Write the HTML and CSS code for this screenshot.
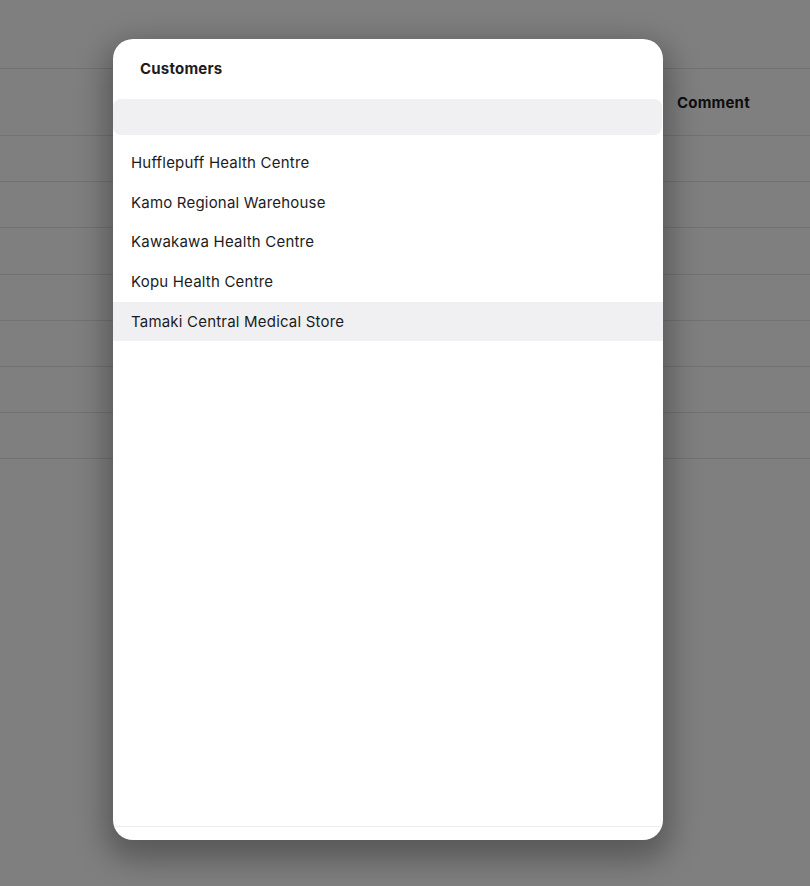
FILE: index.html
```html
<!DOCTYPE html>
<html>
<head>
<meta charset="utf-8">
<link rel="stylesheet" href="styles.css">
</head>
<body>
<div class="page">
  <div class="table">
    <div class="thead">
      <div class="th"></div>
      <div class="th comment">Comment</div>
    </div>
    <div class="row"></div>
    <div class="row"></div>
    <div class="row"></div>
    <div class="row"></div>
    <div class="row"></div>
    <div class="row"></div>
    <div class="row"></div>
  </div>
</div>
<div class="overlay">
  <div class="modal">
    <div class="title">Customers</div>
    <div class="search"></div>
    <ul class="list">
      <li class="item">Hufflepuff Health Centre</li>
      <li class="item">Kamo Regional Warehouse</li>
      <li class="item">Kawakawa Health Centre</li>
      <li class="item">Kopu Health Centre</li>
      <li class="item active">Tamaki Central Medical Store</li>
    </ul>
    <div class="footer"></div>
  </div>
</div>
</body>
</html>
```
FILE: styles.css
```css
* { box-sizing: border-box; }
html, body { margin: 0; padding: 0; }
body {
  width: 810px;
  height: 886px;
  overflow: hidden;
  background: #ffffff;
  font-family: Inter, "Liberation Sans", sans-serif;
  position: relative;
}
.page { padding-top: 68px; }
.table { width: 810px; }
.thead {
  height: 68px;
  border-top: 1px solid #e4e4e4;
  border-bottom: 1px solid #e4e4e4;
  display: flex;
  align-items: center;
}
.th { flex: 1; }
.comment {
  flex: 0 0 133px;
  font-weight: 700;
  font-size: 15px;
  letter-spacing: 0.2px;
  color: #1c1c1e;
}
.row {
  height: 46.2px;
  border-bottom: 1px solid #e4e4e4;
}
.overlay {
  position: absolute;
  inset: 0;
  background: rgba(0, 0, 0, 0.5);
}
.modal {
  position: absolute;
  left: 113px;
  top: 39px;
  width: 550px;
  height: 801px;
  background: #ffffff;
  border-radius: 20px;
  box-shadow: 0 12px 30px 8px rgba(0, 0, 0, 0.3);
  display: flex;
  flex-direction: column;
  overflow: hidden;
}
.title {
  padding: 20px 27px 0;
  height: 60px;
  font-weight: 700;
  font-size: 15px;
  line-height: 19px;
  letter-spacing: 0.2px;
  color: #1c1c1e;
}
.search {
  height: 36px;
  margin-right: 1px;
  background: #f0f0f2;
  border-radius: 8px;
}
.list {
  list-style: none;
  margin: 0;
  padding: 7.5px 0 0;
  flex: 1;
}
.item {
  height: 39.75px;
  display: flex;
  align-items: center;
  padding-left: 18px;
  font-size: 15px;
  letter-spacing: 0.2px;
  color: #1c1c1e;
}
.item.active { background: #f0f0f2; }
.footer {
  height: 14px;
  border-top: 1px solid #ececec;
}
```
